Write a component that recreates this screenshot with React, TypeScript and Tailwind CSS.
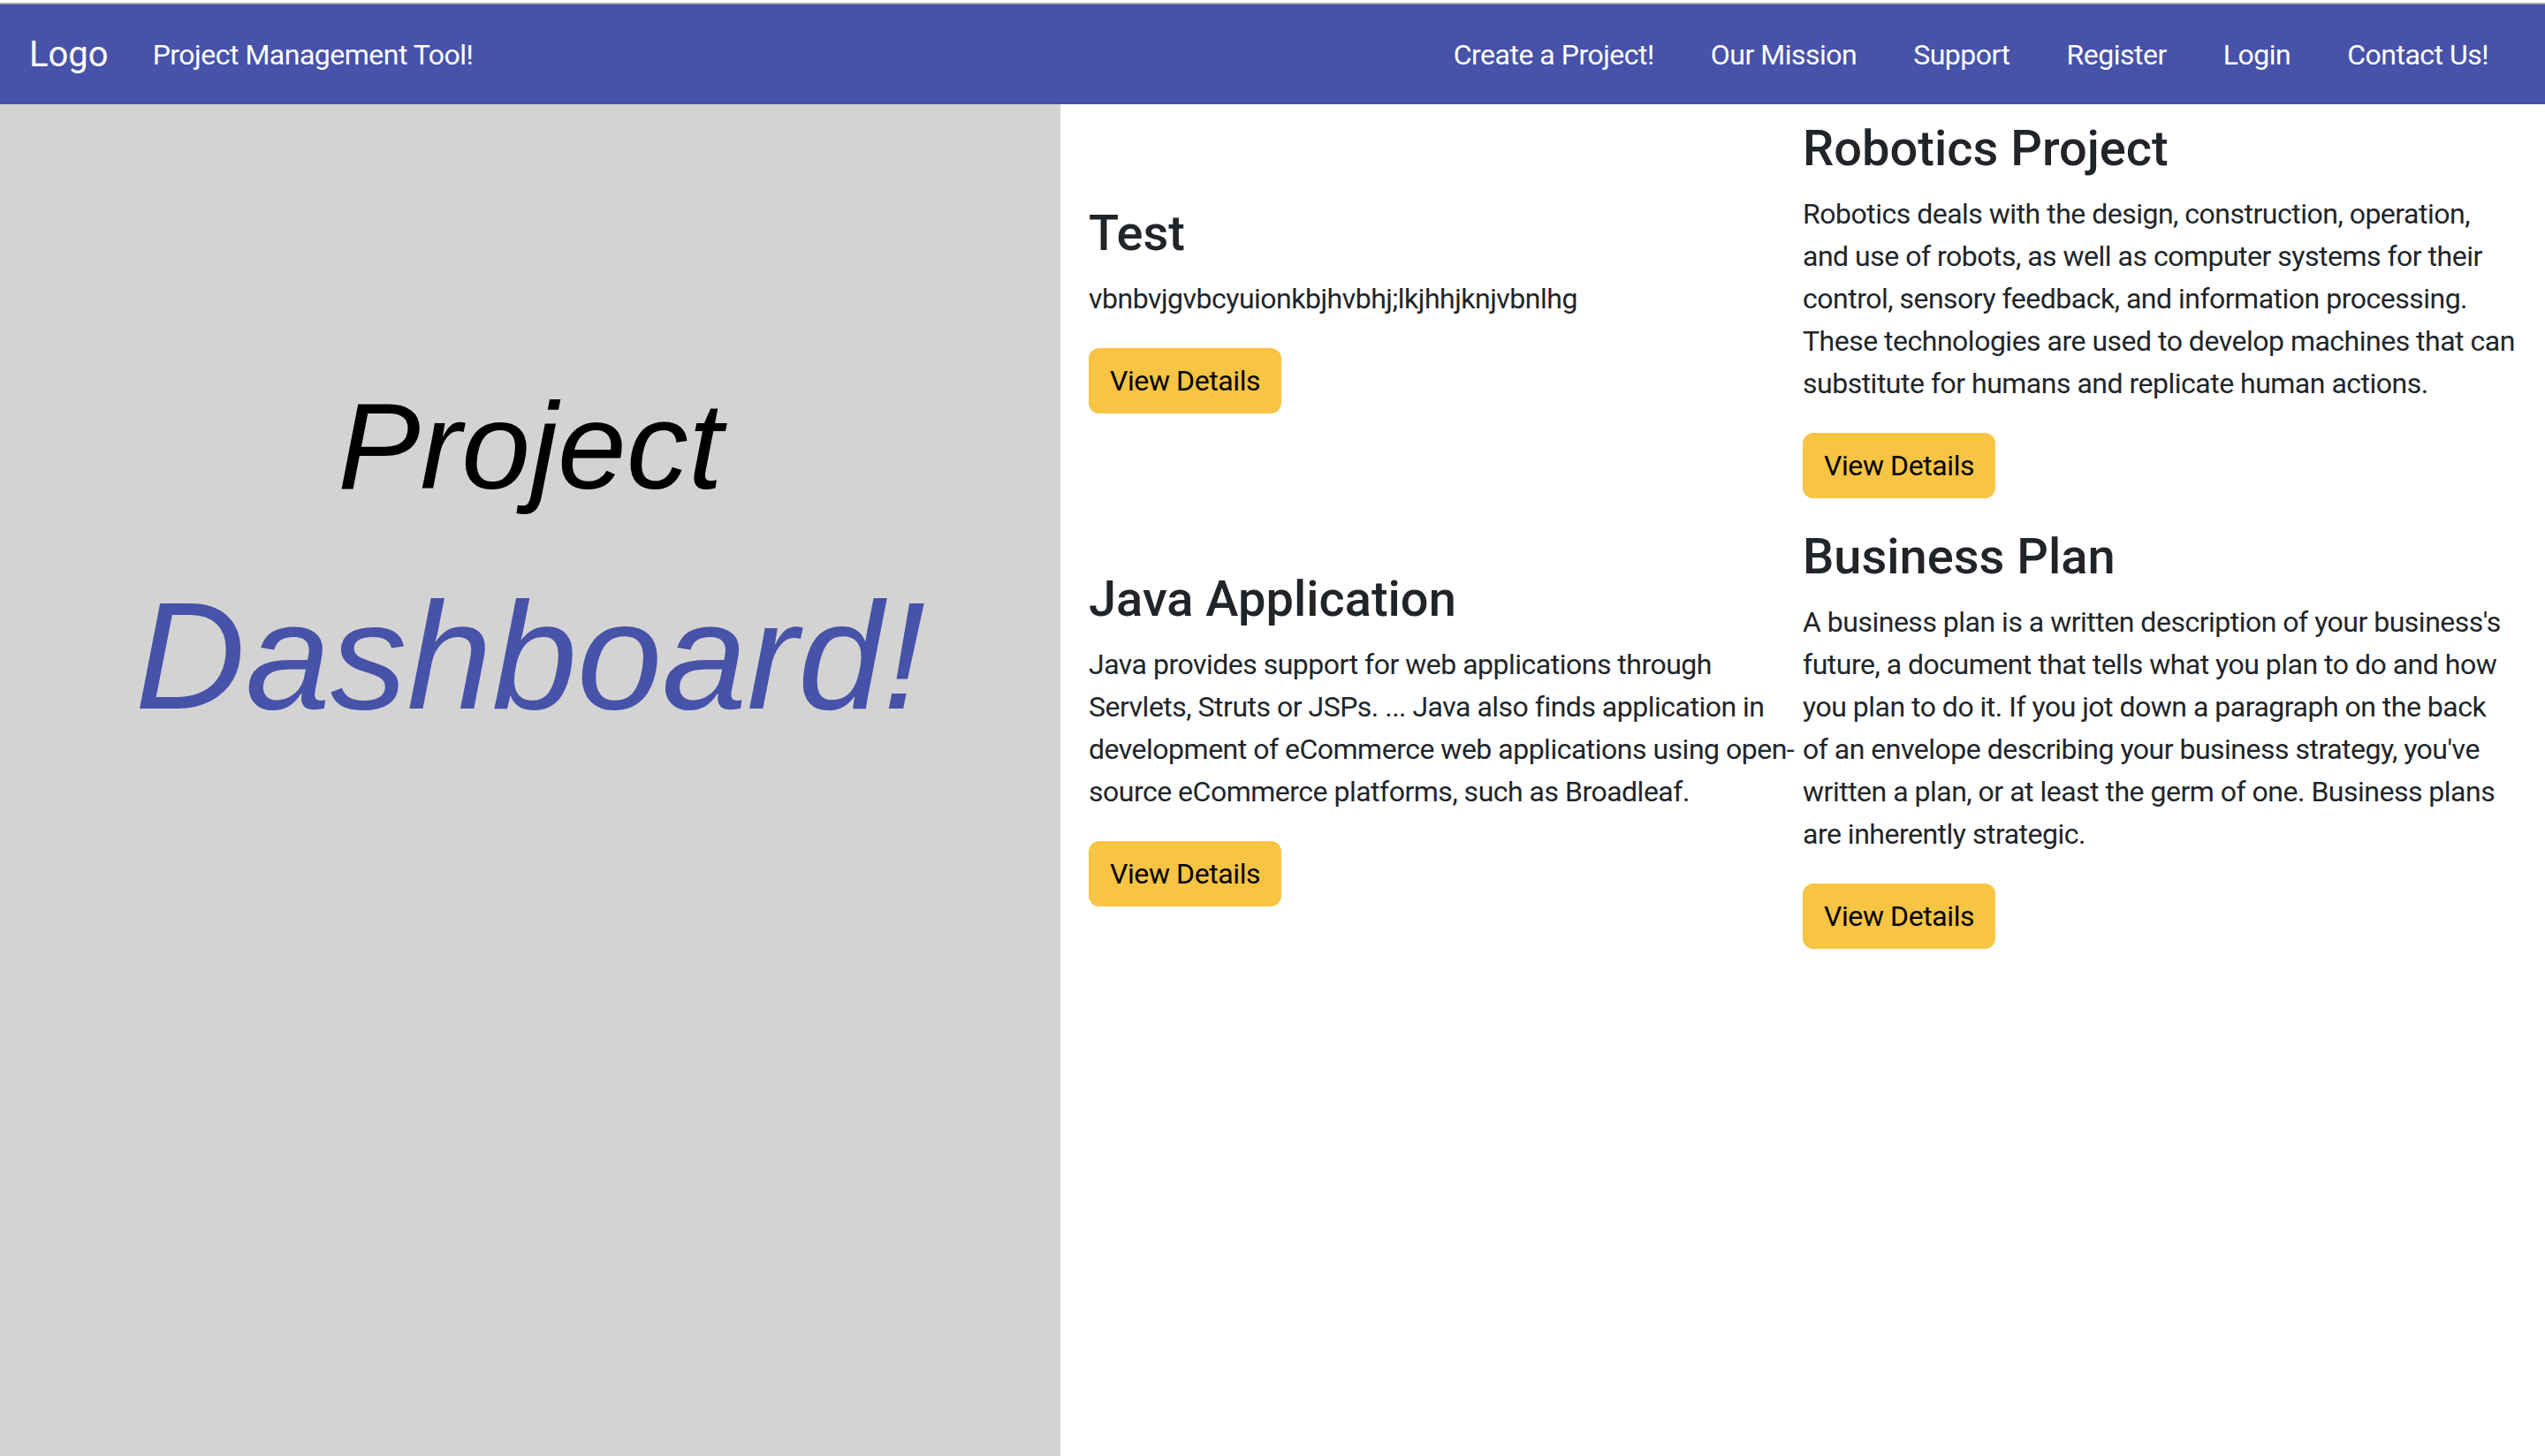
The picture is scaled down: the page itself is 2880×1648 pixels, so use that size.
import React from 'react';

const navLinks = ['Create a Project!', 'Our Mission', 'Support', 'Register', 'Login', 'Contact Us!'];

const projects = [
  {
    title: 'Test',
    body: 'vbnbvjgvbcyuionkbjhvbhj;lkjhhjknjvbnlhg',
  },
  {
    title: 'Robotics Project',
    body: 'Robotics deals with the design, construction, operation, and use of robots, as well as computer systems for their control, sensory feedback, and information processing. These technologies are used to develop machines that can substitute for humans and replicate human actions.',
  },
  {
    title: 'Java Application',
    body: 'Java provides support for web applications through Servlets, Struts or JSPs. ... Java also finds application in development of eCommerce web applications using open-source eCommerce platforms, such as Broadleaf.',
  },
  {
    title: 'Business Plan',
    body: "A business plan is a written description of your business's future, a document that tells what you plan to do and how you plan to do it. If you jot down a paragraph on the back of an envelope describing your business strategy, you've written a plan, or at least the germ of one. Business plans are inherently strategic.",
  },
];

const ProjectCard: React.FC<{ title: string; body: string }> = ({ title, body }) => (
  <div className="flex flex-col items-start">
    <h3 className="text-[56px] leading-[1.2] font-medium mb-[16px] text-[#212529]">{title}</h3>
    <p className="text-[32px] leading-[48px] tracking-[-0.5px] mb-[32px] text-[#212529]">{body}</p>
    <button className="bg-[#f7c443] text-black text-[32px] leading-[48px] tracking-[-0.4px] px-[24px] py-[13px] rounded-[12px]">
      View Details
    </button>
  </div>
);

export default function App() {
  return (
    <div className="h-screen flex flex-col bg-white font-['Roboto','Noto_Sans',sans-serif]">
      <div className="h-[5px] bg-white border-b-2 border-[#a9a9a9]" />
      <nav className="h-[113px] shrink-0 bg-[#4752a9] flex items-center pl-[33px] pr-[64px] text-white">
        <span className="text-[40px] leading-none mr-[50px]">Logo</span>
        <span className="text-[32px] leading-none tracking-[-0.5px]">Project Management Tool!</span>
        <ul className="ml-auto flex items-center gap-[64px] text-[32px] leading-none tracking-[-0.5px]">
          {navLinks.map(l => (
            <li key={l}>{l}</li>
          ))}
        </ul>
      </nav>

      <div className="flex flex-1 min-h-0">
        <aside className="w-[1200px] shrink-0 bg-[#d3d3d3] flex flex-col items-center pt-[303px] font-['Liberation_Sans','Arial',sans-serif] italic">
          <div className="text-[140px] leading-[1.2] text-black">Project</div>
          <div className="text-[173px] leading-[1.2] text-[#4752a9] mt-[50px]">Dashboard!</div>
        </aside>

        <main className="flex-1 px-[32px] pt-[17px] grid grid-cols-2 gap-y-[33px] items-center content-start">
          {projects.map(p => (
            <ProjectCard key={p.title} title={p.title} body={p.body} />
          ))}
        </main>
      </div>
    </div>
  );
}
